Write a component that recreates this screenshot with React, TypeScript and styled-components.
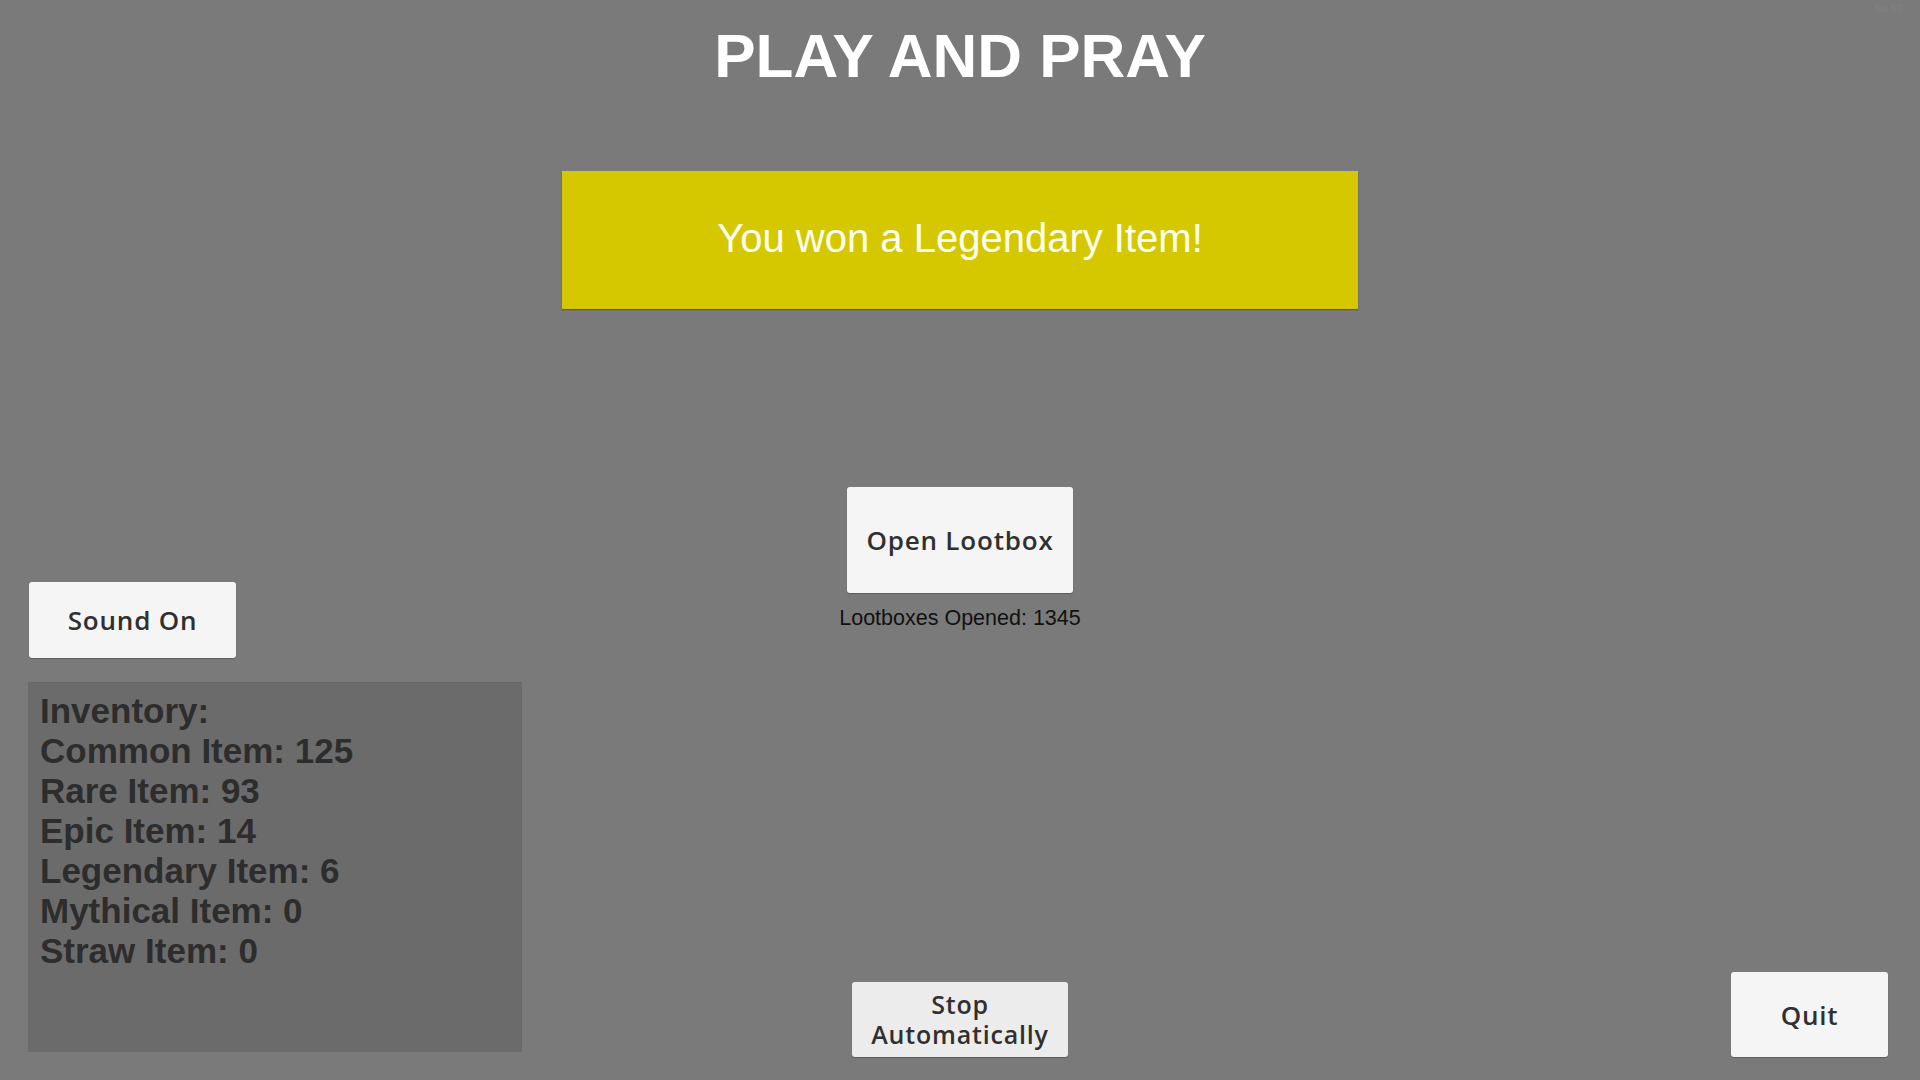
import React from "react";
import styled, { createGlobalStyle } from "styled-components";

const uiFont = `"Liberation Sans", Arial, sans-serif`;
const buttonFont = `"Open Sans", "Noto Sans", sans-serif`;

const GlobalStyle = createGlobalStyle`
  html, body {
    margin: 0;
    padding: 0;
    background-color: #7a7a7a;
  }
  #root {
    height: 100vh;
  }
`;

const Screen = styled.main`
  position: relative;
  display: flex;
  flex-direction: column;
  align-items: center;
  height: 100vh;
  box-sizing: border-box;
  background-color: #7a7a7a;
  font-family: ${uiFont};
  overflow: hidden;
`;

const Stats = styled.div`
  position: absolute;
  top: 3px;
  right: 18px;
  font-family: ${uiFont};
  font-size: 10px;
  color: #828282;
`;

const Title = styled.h1`
  margin: 26px 0 0 0;
  font-size: 62px;
  line-height: 60px;
  font-weight: 700;
  color: #ffffff;
`;

const Banner = styled.div`
  display: flex;
  align-items: center;
  justify-content: center;
  width: 796px;
  height: 138px;
  margin-top: 85px;
  background-color: #d6c800;
  box-shadow: 0 1px 1px rgba(0, 0, 0, 0.3);
  color: #fffff0;
  font-size: 40px;
  padding-bottom: 4px;
  box-sizing: border-box;
`;

const Stage = styled.section`
  flex: 1;
  align-self: stretch;
  display: grid;
  grid-template-columns: 1fr auto 1fr;
  padding: 0 28px 23px 28px;
`;

const Column = styled.div<{ $align: "start" | "center" | "end" }>`
  display: flex;
  flex-direction: column;
  align-items: ${(p) =>
    p.$align === "start" ? "flex-start" : p.$align === "end" ? "flex-end" : "center"};
  justify-content: flex-end;
`;

const Button = styled.button<{ $w: number; $h: number; $shade?: string }>`
  display: flex;
  align-items: center;
  justify-content: center;
  width: ${(p) => p.$w}px;
  height: ${(p) => p.$h}px;
  padding: 0;
  border: none;
  border-radius: 3px;
  background-color: ${(p) => p.$shade || "#f5f5f5"};
  box-shadow: 0 1px 1px rgba(0, 0, 0, 0.25);
  font-family: ${buttonFont};
  font-weight: 600;
  font-size: 26px;
  letter-spacing: 0.8px;
  color: #303030;
  line-height: 30px;
  text-align: center;
`;

const SoundButton = styled(Button)`
  margin-left: 1px;
  margin-bottom: 24px;
`;

const QuitButton = styled(Button)`
  margin-right: 4px;
`;

const StopButton = styled(Button)`
  font-size: 25px;
  line-height: 30px;
  padding-bottom: 1px;
`;

const LootArea = styled.div`
  display: flex;
  flex-direction: column;
  align-items: center;
  margin-top: 178px;
  flex: 1;
`;

const Counter = styled.div`
  margin-top: 12px;
  font-size: 21.5px;
  line-height: 26px;
  color: #111111;
`;

const Inventory = styled.div`
  width: 494px;
  height: 370px;
  margin-bottom: 5px;
  box-sizing: border-box;
  padding: 8px 12px;
  background-color: #6b6b6b;
  border-top: 1px solid #656565;
`;

const InventoryLine = styled.div`
  font-size: 35px;
  line-height: 40px;
  font-weight: 700;
  color: #2d2d2d;
`;

const inventory = [
  "Inventory:",
  "Common Item: 125",
  "Rare Item: 93",
  "Epic Item: 14",
  "Legendary Item: 6",
  "Mythical Item: 0",
  "Straw Item: 0",
];

export default function App() {
  return (
    <>
      <GlobalStyle />
      <Screen>
        <Stats>fps 60</Stats>
        <Title>PLAY AND PRAY</Title>
        <Banner>You won a Legendary Item!</Banner>
        <Stage>
          <Column $align="start">
            <SoundButton $w={207} $h={76}>
              Sound On
            </SoundButton>
            <Inventory>
              {inventory.map((line) => (
                <InventoryLine key={line}>{line}</InventoryLine>
              ))}
            </Inventory>
          </Column>
          <Column $align="center">
            <LootArea>
              <Button $w={226} $h={106}>
                Open Lootbox
              </Button>
              <Counter>Lootboxes Opened: 1345</Counter>
            </LootArea>
            <StopButton $w={216} $h={75} $shade="#ececec">
              Stop
              <br />
              Automatically
            </StopButton>
          </Column>
          <Column $align="end">
            <QuitButton $w={157} $h={85}>
              Quit
            </QuitButton>
          </Column>
        </Stage>
      </Screen>
    </>
  );
}
